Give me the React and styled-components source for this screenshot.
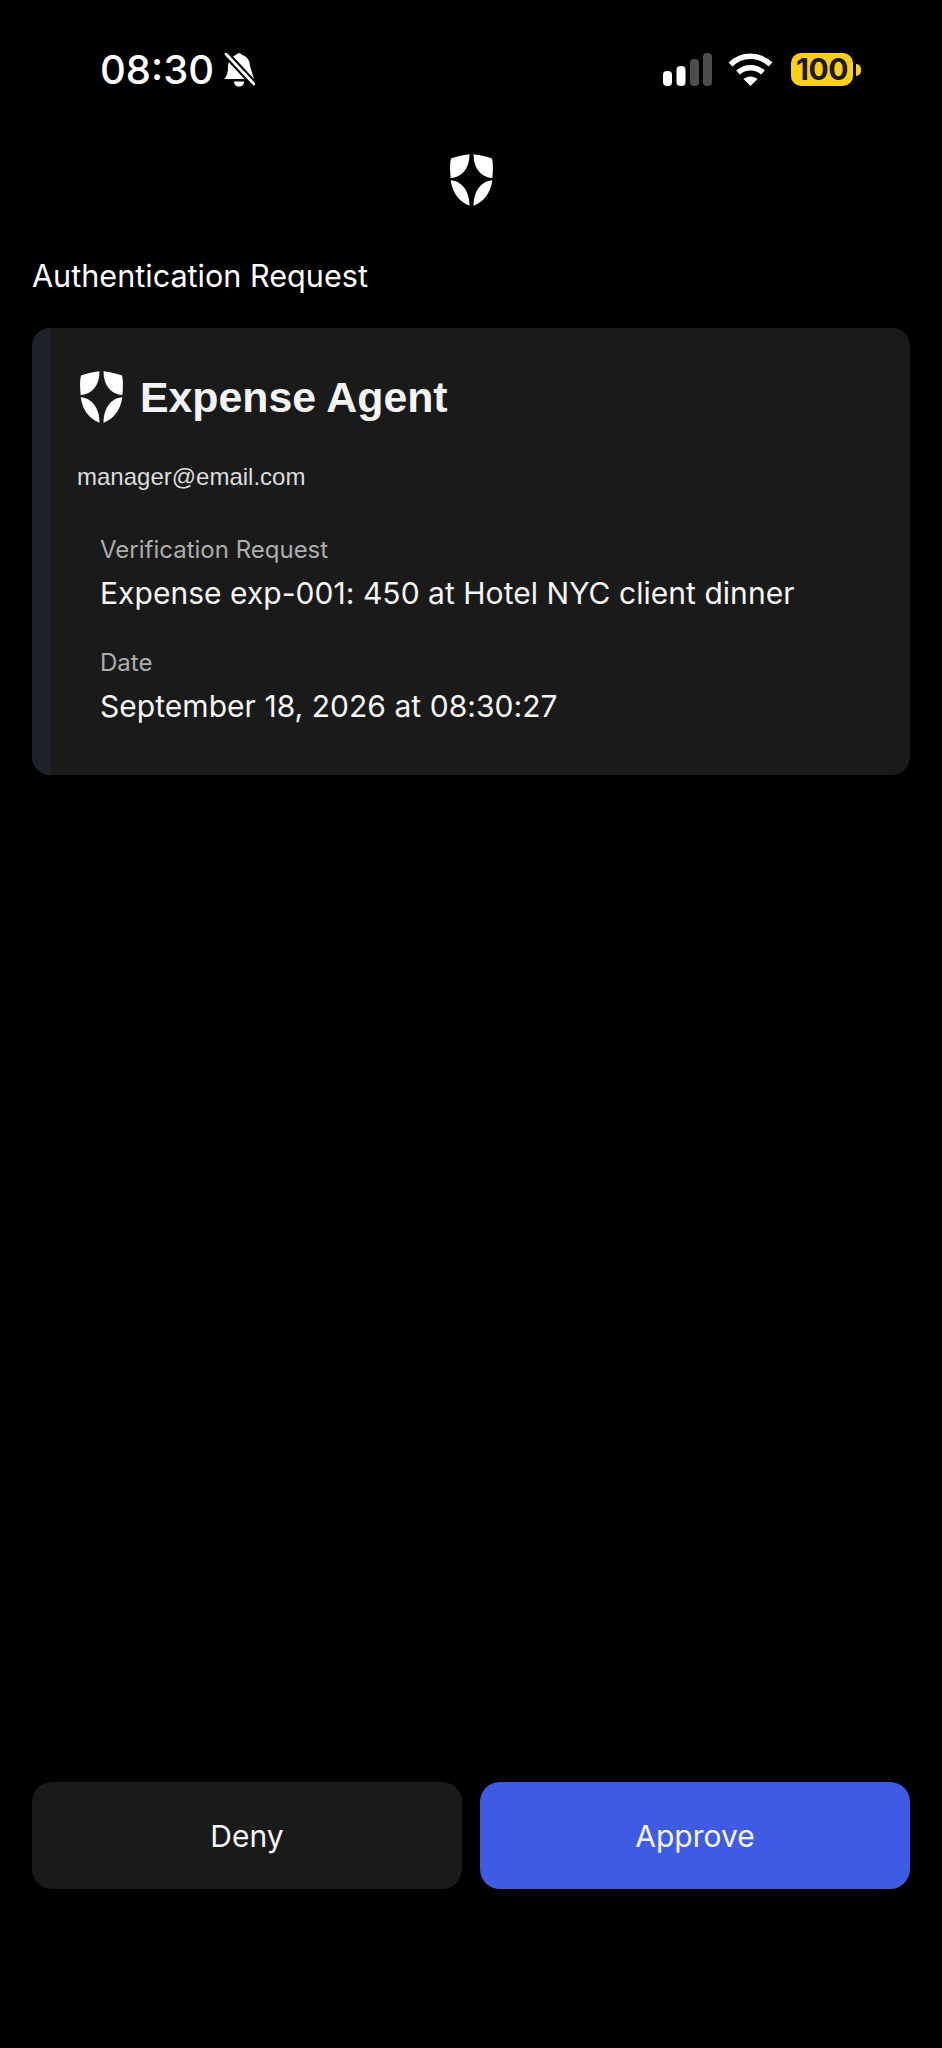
import React from 'react';
import styled, { createGlobalStyle } from 'styled-components';

const Global = createGlobalStyle`
  html, body { margin: 0; padding: 0; background: #000; }
  body { font-family: Inter, "Liberation Sans", sans-serif; color: #fff; }
  * { box-sizing: border-box; }
`;
const Page = styled.div`
  width: 942px; height: 2048px; background: #000; display: flex; flex-direction: column; padding: 0 32px; overflow: hidden;
`;
const StatusBar = styled.div`
  height: 53px; margin-top: 43px; padding: 0 49px 0 68px; display: flex; align-items: center; justify-content: space-between;
`;
const Group = styled.div`display: flex; align-items: center; gap: ${p => p.$gap}px;`;
const Time = styled.div`font-size: 40px; font-weight: 500; line-height: 53px;`;
const Battery = styled.div`display: flex; align-items: center; gap: 3px; margin-left: 2px;`;
const BatteryBody = styled.div`
  width: 62px; height: 33px; border-radius: 10px; background: #fdd015; color: #1a1a1a; font-size: 30px; font-weight: 700;
  line-height: 33px; text-align: center; letter-spacing: -0.5px;
`;
const Nub = styled.div`width: 5px; height: 12px; background: #fdd015; border-radius: 0 6px 6px 0;`;
const LogoRow = styled.div`display: flex; justify-content: center; margin-top: 58px;`;
const Heading = styled.h1`margin: 50px 0 0; font-size: 30.6px; font-weight: 400; line-height: 40px; color: #fff;`;
const Card = styled.section`
  margin-top: 32px; height: 447px; background: #1a1a1a; border-left: 19px solid #1e222b; border-radius: 18px;
  padding: 43px 0 0 26px;
`;
const TitleRow = styled.div`display: flex; align-items: center; gap: 17px; height: 52px; padding-left: 3px;`;
const Title = styled.h2`margin: 0; font-family: "Liberation Sans", Arial, sans-serif; font-size: 42.8px; font-weight: 700; color: #f4f4f4;`;
const Email = styled.div`margin-top: 38px; font-family: "Liberation Sans", Arial, sans-serif; font-size: 24px; line-height: 32px; color: #dcdcdc;`;
const Fields = styled.div`margin-top: 42px; padding-left: 23px; display: flex; flex-direction: column; gap: 35px;`;
const Field = styled.div`display: flex; flex-direction: column; gap: 8px;`;
const Label = styled.div`font-size: 24px; line-height: 30px; color: #adadad;`;
const Value = styled.div`font-size: 30px; line-height: 40px; color: #f6f6f6; letter-spacing: 0.04px;`;
const Actions = styled.div`margin-top: auto; margin-bottom: 159px; display: flex; gap: 18px;`;
const Button = styled.button`
  flex: 1; height: 107px; border: 0; border-radius: 20px; font: 400 30px Inter, sans-serif; color: #f6f6ff;
  background: ${p => (p.$primary ? '#3f5be3' : '#1a1a1a')};
`;

const Shield = ({ w, h }) => (
  <svg width={w} height={h} viewBox="0 0 130 156" fill="#fff">
    <path d="M59 0C38 2 18 7 3 13C-1 30 0 52 2 72C36 70 59 44 59 0Z" />
    <path d="M71 0C92 2 112 7 127 13C131 30 130 52 128 72C94 70 71 44 71 0Z" />
    <path d="M2 79C34 81 59 110 59 156C32 146 8 122 2 79Z" />
    <path d="M128 79C96 81 71 110 71 156C98 146 122 122 128 79Z" />
  </svg>
);
const Bell = () => (
  <svg width="32" height="34" viewBox="0 0 32 34" fill="#fff">
    <path d="M2 25c2-3 3-6 3-11C5 8 9 3 13 2c1-2.500 5-2.500 6 0 5 1 8 6 8 11l4 13H3c-2 0-2-1-1-1z" />
    <path d="M11 28.500h10c0 3-2 5-5 5s-5-2-5-5z" />
    <path d="M3 1l29 31" stroke="#000" strokeWidth="7" />
    <path d="M3 1l28 30" stroke="#fff" strokeWidth="2.800" strokeLinecap="round" />
  </svg>
);
const Signal = () => (
  <svg width="49" height="33" viewBox="0 0 49 33">
    <rect x="0" y="18" width="9" height="15" rx="4" fill="#fff" />
    <rect x="13.500" y="13" width="9" height="20" rx="4" fill="#fff" />
    <rect x="27" y="6" width="9" height="27" rx="4" fill="#4d4d4d" />
    <rect x="40" y="0" width="9" height="33" rx="4" fill="#4d4d4d" />
  </svg>
);
const Wifi = () => (
  <svg width="45" height="33" viewBox="0 0 45 33" fill="none" stroke="#fff" strokeWidth="5.500">
    <path d="M2.500 11.500C14 .5 31 .5 42.500 11.500" />
    <path d="M10 19.500c7-6.500 18-6.500 25 0" />
    <path d="M22.500 33l-7-7c4-3.500 10-3.500 14 0z" fill="#fff" stroke="none" />
  </svg>
);

export default function App() {
  return (
    <Page>
      <Global />
      <StatusBar>
        <Group $gap={9}>
          <Time>08:30</Time>
          <Bell />
        </Group>
        <Group $gap={16}>
          <Signal />
          <Wifi />
          <Battery>
            <BatteryBody>100</BatteryBody>
            <Nub />
          </Battery>
        </Group>
      </StatusBar>
      <LogoRow><Shield w={43} h={52} /></LogoRow>
      <Heading>Authentication Request</Heading>
      <Card>
        <TitleRow>
          <Shield w={43} h={52} />
          <Title>Expense Agent</Title>
        </TitleRow>
        <Email>manager@email.com</Email>
        <Fields>
          <Field>
            <Label>Verification Request</Label>
            <Value>Expense exp-001: 450 at Hotel NYC client dinner</Value>
          </Field>
          <Field>
            <Label>Date</Label>
            <Value>September 18, 2026 at 08:30:27</Value>
          </Field>
        </Fields>
      </Card>
      <Actions>
        <Button>Deny</Button>
        <Button $primary>Approve</Button>
      </Actions>
    </Page>
  );
}
